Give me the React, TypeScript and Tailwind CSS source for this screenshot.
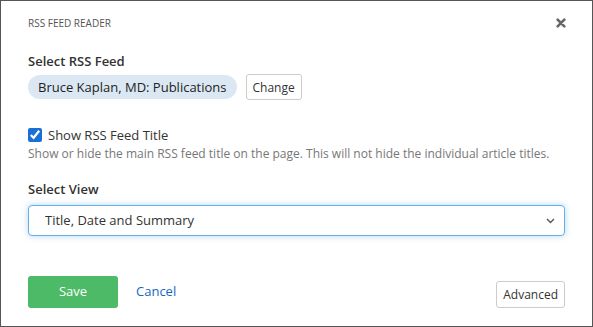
export default function App() {
  return (
    <div
      className="flex h-[327px] w-[593px] flex-col border border-[#555] bg-white px-[27px] text-[#333]"
      style={{ fontFamily: '"Open Sans", sans-serif' }}
    >
      <div className="flex items-center justify-between pt-[15px]">
        <p className="text-[10px] uppercase leading-[14px] text-[#555]">RSS Feed Reader</p>
        <button className="mr-[-1px] text-[#666]" aria-label="Close">
          <svg width="10" height="10" viewBox="0 0 12 12">
            <path d="M2 2 L10 10 M10 2 L2 10" stroke="currentColor" strokeWidth="3.2" strokeLinecap="round" />
          </svg>
        </button>
      </div>

      <h2 className="mt-[22px] text-[13px] font-semibold leading-[18px]">Select RSS Feed</h2>
      <div className="mt-[4px] flex items-center gap-[9px]">
        <span className="rounded-full bg-[#dbe8f3] px-[10px] py-[3px] text-[13px] leading-[18px] text-[#222]">
          Bruce Kaplan, MD: Publications
        </span>
        <button className="h-[26px] rounded-[3px] border border-[#ccc] px-[6px] text-[12px] leading-[17px] text-[#333]">
          Change
        </button>
      </div>

      <label className="mt-[26px] flex items-center gap-[6px] text-[13px] leading-[18px]">
        <input type="checkbox" defaultChecked className="h-[14px] w-[14px] accent-[#1a6fd6]" />
        Show RSS Feed Title
      </label>
      <p className="mt-[1px] text-[12px] leading-[17px] text-[#777]">
        Show or hide the main RSS feed title on the page. This will not hide the individual article titles.
      </p>

      <h2 className="mt-[18px] text-[13px] font-semibold leading-[18px]">Select View</h2>
      <div className="relative mt-[7px]">
        <select className="h-[31px] w-full appearance-none rounded-[4px] border border-[#66afe9] bg-white pl-[16px] text-[13px] text-[#333] shadow-[0_0_6px_rgba(102,175,233,0.5)] outline-none">
          <option>Title, Date and Summary</option>
        </select>
        <svg
          className="pointer-events-none absolute right-[10px] top-[13px]"
          width="9"
          height="6"
          viewBox="0 0 9 6"
        >
          <path d="M1 1 L4.5 4.5 L8 1" fill="none" stroke="#555" strokeWidth="1.4" />
        </svg>
      </div>

      <div className="mt-[40px] flex items-end justify-between">
        <div className="flex items-center gap-[18px]">
          <button className="h-[32px] w-[90px] rounded-[3px] bg-[#4dba67] text-[13px] text-white">Save</button>
          <a className="text-[13px] text-[#1a66c0]" href="#">
            Cancel
          </a>
        </div>
        <button className="h-[27px] rounded-[3px] border border-[#ccc] px-[6px] text-[12px] leading-[17px] text-[#333]">
          Advanced
        </button>
      </div>
    </div>
  );
}
